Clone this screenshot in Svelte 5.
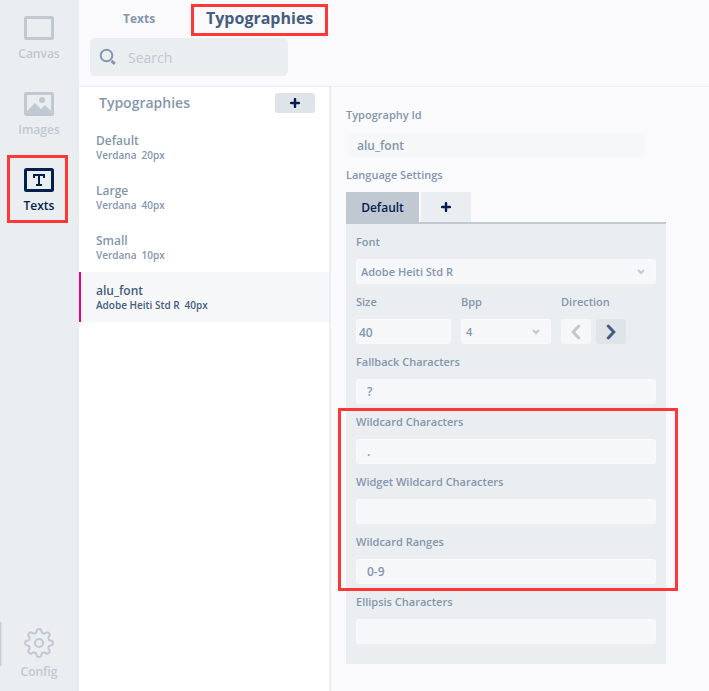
<script>
  const fonts = [
    { name: 'Default', family: 'Verdana', size: '20px' },
    { name: 'Large', family: 'Verdana', size: '40px' },
    { name: 'Small', family: 'Verdana', size: '10px' },
    { name: 'alu_font', family: 'Adobe Heiti Std R', size: '40px' }
  ];
  let selected = $state('alu_font');
  let rtl = $state(false);

  // Outline of the eight-lobed gear
  const gear = 'M' + Array.from({ length: 160 }, (_, i) => {
    const a = (i / 160) * Math.PI * 2;
    const r = 12.2 + 1.7 * Math.tanh(1.8 * Math.cos(8 * a)) / Math.tanh(1.8);
    return `${(15 + r * Math.sin(a)).toFixed(2)} ${(15 - r * Math.cos(a)).toFixed(2)}`;
  }).join('L') + 'Z';
</script>

{#snippet plus()}
  <svg width="10" height="10" viewBox="0 0 10 10" aria-hidden="true"><path d="M5 1v8M1 5h8" stroke="currentColor" stroke-width="2.4" stroke-linecap="round" /></svg>
{/snippet}

{#snippet field(id, label, value)}
  <div class="field">
    <label for={id}>{label}</label>
    <input {id} type="text" {value} />
  </div>
{/snippet}

<div class="app">
  <nav class="sidebar" aria-label="Sections">
    <button class="nav">
      <svg width="30" height="24" viewBox="0 0 30 24"><rect x="1.5" y="1.5" width="27" height="21" rx="1" fill="none" stroke="currentColor" stroke-width="3" /></svg>
      <span>Canvas</span>
    </button>
    <button class="nav">
      <svg width="30" height="24" viewBox="0 0 30 24"><rect x="1.5" y="1.5" width="27" height="21" rx="1" fill="none" stroke="currentColor" stroke-width="3" /><circle cx="18" cy="8" r="3" fill="currentColor" /><path d="M3 19l8-8 6 6 4-4 6 6v3H3z" fill="currentColor" /></svg>
      <span>Images</span>
    </button>
    <button class="nav current marked">
      <svg width="30" height="24" viewBox="0 0 30 24"><rect x="1.5" y="1.5" width="27" height="21" rx="1" fill="none" stroke="currentColor" stroke-width="3" /><path d="M9 6h12v4h-2V8h-3v8h2v2h-6v-2h2V8h-3v2H9z" fill="currentColor" /></svg>
      <span>Texts</span>
    </button>
    <button class="nav config">
      <svg width="30" height="30" viewBox="0 0 30 30" fill="none" stroke="currentColor" stroke-width="2"><path d={gear} stroke-linejoin="round" /><circle cx="15" cy="15" r="4" /></svg>
      <span>Config</span>
    </button>
    <i class="edge"></i>
  </nav>

  <div class="content">
    <header>
      <div class="tabs">
        <button class="tab">Texts</button>
        <button class="tab big marked">Typographies</button>
      </div>
      <div class="search">
        <svg width="18" height="18" viewBox="0 0 18 18" fill="none" stroke="currentColor"><circle cx="7.5" cy="7.5" r="5.8" stroke-width="2" /><path d="M12.5 12.8l3.3 3" stroke-width="3" /></svg>
        <input type="search" placeholder="Search" aria-label="Search" />
      </div>
    </header>

    <main>
      <section class="list">
        <div class="heading">
          <h2>Typographies</h2>
          <button class="add" aria-label="Add typography">{@render plus()}</button>
        </div>
        {#each fonts as f}
          <button class="item" class:selected={selected === f.name} onclick={() => (selected = f.name)}>
            <span class="name">{f.name}</span>
            <span class="info"><span>{f.family}</span><span>{f.size}</span></span>
          </button>
        {/each}
      </section>

      <section class="details">
        <label for="tid">Typography Id</label>
        <input id="tid" class="tid" type="text" value="alu_font" />
        <h3>Language Settings</h3>
        <div class="langs">
          <button class="lang active">Default</button>
          <button class="lang" aria-label="Add language">{@render plus()}</button>
        </div>
        <div class="panel">
          <div class="field">
            <label for="font">Font</label>
            <select id="font"><option>Adobe Heiti Std R</option></select>
          </div>
          <div class="row">
            <div class="field size">
              <label for="size">Size</label>
              <input id="size" type="text" value="40" />
            </div>
            <div class="field bpp">
              <label for="bpp">Bpp</label>
              <select id="bpp"><option>4</option></select>
            </div>
            <div class="field" role="group" aria-labelledby="dir">
              <span id="dir" class="label">Direction</span>
              <div class="arrows">
                <button class:on={rtl} aria-label="Right to left" onclick={() => (rtl = true)}><svg width="10" height="16" viewBox="0 0 10 16"><path d="M7.8 2L2.2 8l5.6 6" /></svg></button>
                <button class:on={!rtl} aria-label="Left to right" onclick={() => (rtl = false)}><svg width="10" height="16" viewBox="0 0 10 16"><path d="M2.2 2l5.6 6-5.6 6" /></svg></button>
              </div>
            </div>
          </div>
          {@render field('fallback', 'Fallback Characters', '?')}
          <div class="wild">
            {@render field('wildcard', 'Wildcard Characters', '.')}
            {@render field('widget', 'Widget Wildcard Characters', '')}
            {@render field('ranges', 'Wildcard Ranges', '0-9')}
          </div>
          {@render field('ellipsis', 'Ellipsis Characters', '')}
        </div>
      </section>
    </main>
  </div>
</div>

<style>
  :global(body) { margin: 0; }
  .app, .app * { box-sizing: border-box; }
  .app {
    display: flex;
    min-height: 100vh;
    background: #fafafc;
    color: #8496ac;
    font: 600 11px/20px "Open Sans", "Noto Sans", sans-serif;
  }
  button, input, select { font: inherit; color: inherit; border: 0; margin: 0; padding: 0; background: none; }
  button { cursor: pointer; }
  input, select { min-width: 0; width: 100%; outline: 0; }
  svg { display: block; flex: none; }
  h2, h3 { margin: 0; font-weight: 600; }

  .sidebar {
    position: relative;
    flex: none;
    width: 79px;
    display: flex;
    flex-direction: column;
    gap: 16px;
    padding: 8px 9px 9px 8px;
    background: #eaeef1;
  }
  .nav {
    position: relative;
    display: flex;
    flex-direction: column;
    align-items: center;
    gap: 4px;
    height: 60px;
    padding-top: 8px;
    color: #c0c8d2;
    font-size: 12px;
  }
  .nav.current { color: #03204c; }
  .nav.config { margin-top: auto; height: 64px; padding-top: 10px; }
  .nav.marked::after { content: ''; position: absolute; inset: -5px 2px -3px -1px; border: 3px solid #fd3837; }
  .edge { position: absolute; left: 0; bottom: 25px; width: 1px; height: 44px; background: #c9cbcd; box-shadow: 0 0 2px #b9bbbd; }

  .content { flex: 1; min-width: 0; display: flex; flex-direction: column; }
  header { padding: 4px 11px 10px; border-bottom: 1px solid #eaeef2; }
  .tabs { display: flex; align-items: flex-start; gap: 36px; padding-left: 33px; }
  .tab { height: 30px; font-size: 12px; font-weight: 700; }
  .tab.big { width: 137px; height: 32px; margin-bottom: 2px; padding-bottom: 4px; color: #455d7e; font-size: 16px; }
  .tab.marked { border: 3px solid #fd3837; }
  .search {
    display: flex;
    align-items: center;
    gap: 11px;
    width: 198px;
    height: 38px;
    padding: 0 9px;
    border-radius: 5px;
    background: #eaeef1;
  }
  .search input { height: 38px; font-size: 14px; font-weight: 400; }
  .search input::placeholder { color: #c0c8d2; opacity: 1; }

  main { flex: 1; display: flex; }
  .list { flex: none; width: 252px; background: #fff; border-right: 2px solid #eaeef2; }
  .heading { display: flex; justify-content: space-between; align-items: center; height: 35px; padding: 0 14px 4px 20px; }
  .heading h2 { font-size: 14px; }
  .add { display: grid; place-items: center; width: 40px; height: 20px; border-radius: 3px; background: #dfe4e8; color: #03204c; }
  .item {
    display: block;
    width: 100%;
    height: 50px;
    padding: 6px 15px;
    border-left: 2px solid transparent;
    text-align: left;
  }
  .item.selected { border-color: #e6007e; background: #f5f7f9; color: #455d7e; }
  .name { display: block; font-size: 12px; line-height: 16px; }
  .info { display: flex; gap: 5px; font-size: 10px; line-height: 12px; }

  .details { flex: 1; max-width: 350px; padding: 18px 15px 27px; }
  .details label, .label, h3 { display: block; font-size: 11px; line-height: 20px; }
  .tid { display: block; width: calc(100% - 21px); height: 24px; margin: 8px 0; padding: 0 11px; border-radius: 3px; background: #f5f7f9; font-size: 12px; }
  .langs { display: flex; gap: 2px; margin-top: 7px; }
  .lang { display: grid; place-items: center; width: 50px; height: 30px; background: #eaeef1; color: #03204c; font-size: 12px; }
  .lang.active { width: 73px; padding-top: 2px; background: #c0c8d2; }
  .panel {
    display: flex;
    flex-direction: column;
    gap: 8px;
    padding: 8px 10px 20px;
    border-top: 2px solid #c0c8d2;
    background: #eaeef1;
  }
  .field { display: flex; flex-direction: column; gap: 7px; }
  .field input, .field select { height: 25px; padding: 0 10px; border: 1px solid #fafafc; border-radius: 3px; background-color: #f5f7f9; font-size: 12px; }
  .field select {
    appearance: none;
    padding: 0 4px;
    font-size: 11px;
    background-image: url("data:image/svg+xml,%3Csvg xmlns='http://www.w3.org/2000/svg' width='8' height='6'%3E%3Cpath d='M1 1l3 3 3-3' fill='none' stroke='%23c0c8d2' stroke-width='2'/%3E%3C/svg%3E");
    background-repeat: no-repeat;
    background-position: right 10px center;
  }
  .row { display: flex; gap: 10px; }
  .size { width: 95px; }
  .field.size input { padding: 1px 2px 0; }
  .bpp { width: 90px; }
  .arrows { display: flex; gap: 5px; }
  .arrows button { display: grid; place-items: center; width: 30px; height: 25px; border-radius: 3px; background: #f5f7f9; color: #c0c8d2; }
  .arrows button.on { background: #dfe4e8; color: #455d7e; }
  .arrows path { fill: none; stroke: currentColor; stroke-width: 3; stroke-linecap: round; }
  .wild { position: relative; display: flex; flex-direction: column; gap: 8px; }
  .wild::after { content: ''; position: absolute; inset: -4px -22px -7px -18px; border: 3px solid #fd3837; pointer-events: none; }
</style>
